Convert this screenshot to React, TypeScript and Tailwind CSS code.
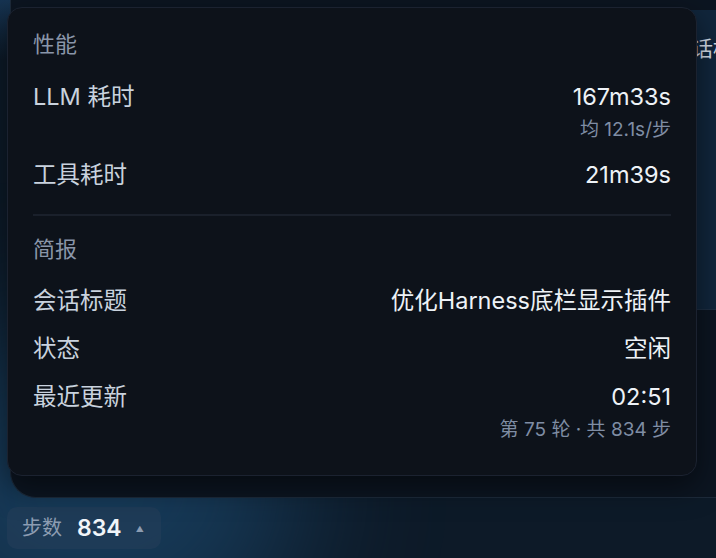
import React from "react";

const sans = "font-['Inter','Noto_Sans_CJK_SC',sans-serif]";

function Row({ label, value, sub }: { label: string; value: string; sub?: string }) {
  return (
    <div className="flex flex-row justify-between items-start">
      <span className="text-[23.5px] leading-[30px] text-[#c9d2de]">{label}</span>
      <div className="flex flex-col items-end">
        <span className="text-[23.5px] leading-[30px] text-[#eef2f7]">{value}</span>
        {sub && <span className="text-[19px] leading-[24px] mt-[6px] text-[#7f8da4]">{sub}</span>}
      </div>
    </div>
  );
}

export default function App() {
  return (
    <div className={`relative w-[716px] h-[558px] overflow-hidden bg-[#0d1a28] ${sans}`}>
      {/* glow */}
      <div className="absolute -left-[120px] top-[330px] w-[420px] h-[320px] rounded-full bg-[#1d4f78] opacity-60 blur-[70px]" />
      <div className="absolute left-0 top-0 w-[716px] h-[60px] bg-gradient-to-b from-[#163452] to-transparent" />

      {/* background app */}
      <div className="relative flex flex-col h-full">
        <div className="ml-[10px] mt-[-30px] h-[528px] rounded-bl-[26px] border border-[#1d2a3a] border-r-0 border-t-0 bg-[#0c1521] flex flex-row justify-end items-start">
          <div className="mt-[40px] w-[60px] h-[300px] border-b border-[#1d2e42] bg-[#11263c] pt-[26px] pl-[15px] overflow-hidden whitespace-nowrap text-[21px] leading-[26px] text-[#d5dde8]">
            对话框
          </div>
        </div>

        <div className="flex flex-row px-[7px] pt-[9px]">
          <div className="flex flex-row items-center h-[42px] pl-[15px] pr-[17px] rounded-[10px] bg-[#213c58]/80">
            <span className="text-[20px] text-[#8d9db2]">步数</span>
            <span className="ml-[15px] text-[23px] font-semibold text-[#f1f5f9]">834</span>
            <span className="text-[8px] text-[#8d9db2] ml-[14px] mt-[2px]">▲</span>
          </div>
        </div>
      </div>

      {/* popover */}
      <div className="absolute left-[7px] top-[7px] w-[690px] h-[469px] rounded-[15px] border border-[#1b2230] bg-[#0d121a] shadow-[0_10px_30px_rgba(0,0,0,0.5)] px-[25px] pt-[25px]">
        <div className="text-[22px] leading-[22px] text-[#8a96a9]">性能</div>
        <div className="mt-[27px] flex flex-col gap-[18px]">
          <Row label="LLM 耗时" value="167m33s" sub="均 12.1s/步" />
          <Row label="工具耗时" value="21m39s" />
        </div>
        <div className="mt-[24px] h-[2px] bg-[#1a202b]" />
        <div className="mt-[22px] text-[22px] leading-[22px] text-[#8a96a9]">简报</div>
        <div className="mt-[26px] flex flex-col gap-[18px]">
          <Row label="会话标题" value="优化Harness底栏显示插件" />
          <Row label="状态" value="空闲" />
          <Row label="最近更新" value="02:51" sub="第 75 轮 · 共 834 步" />
        </div>
      </div>
    </div>
  );
}
